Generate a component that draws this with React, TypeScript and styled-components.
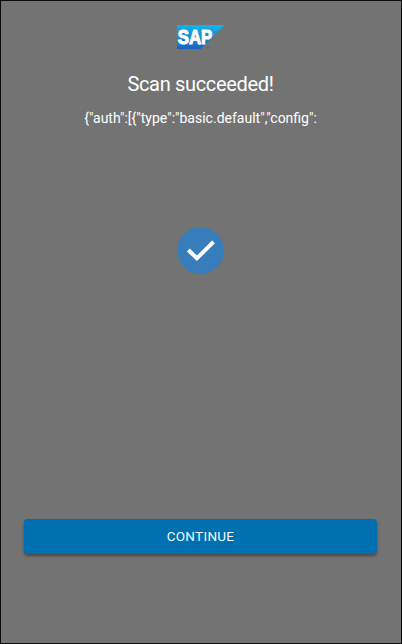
import React from "react";
import styled, { createGlobalStyle } from "styled-components";

const GlobalStyle = createGlobalStyle`
  * { box-sizing: border-box; }
  body { margin: 0; background: #737373; }
`;

const Screen = styled.main`
  width: 402px;
  height: 644px;
  padding: 24px 24px 0 23px;
  border: 1px solid #0c0c0c;
  background: #737373;
  display: flex;
  flex-direction: column;
  align-items: center;
  color: #fff;
  font-family: Roboto, "Noto Sans", sans-serif;
`;

const Logo = styled.svg`
  display: block;
  flex: none;
  width: 48px;
  height: 24px;
`;

const Title = styled.h1`
  margin: 21px 0 0;
  height: 28px;
  font-size: 20px;
  line-height: 28px;
  font-weight: 400;
  letter-spacing: -0.32px;
  white-space: nowrap;
`;

const Payload = styled.p`
  margin: 10px 0 0;
  height: 20px;
  font-size: 14px;
  line-height: 20px;
  white-space: nowrap;
`;

const StatusIcon = styled.svg`
  display: block;
  flex: none;
  width: 48px;
  height: 48px;
  margin-top: 98px;
`;

const ContinueButton = styled.button`
  width: 353px;
  height: 35px;
  margin-top: 245px;
  padding: 0;
  border: 0;
  border-radius: 4px;
  background: #0070b1;
  box-shadow: 0 2px 3px rgba(0, 0, 0, 0.38);
  color: #f4f9fc;
  font-family: inherit;
  font-size: 13.5px;
  letter-spacing: 0.3px;
  line-height: 35px;
`;

export default function App() {
  return (
    <>
      <GlobalStyle />
      <Screen>
        <Logo viewBox="0 0 48 24" role="img" aria-label="SAP">
          <defs>
            <linearGradient id="sapBlue" x1="0" y1="0" x2="0" y2="1">
              <stop offset="0" stopColor="#10b4ee" />
              <stop offset="1" stopColor="#1d62bd" />
            </linearGradient>
          </defs>
          <path d="M0 0H47.5L23.7 24H0Z" fill="url(#sapBlue)" />
          <text x="0.8" y="19" textLength="34.5" lengthAdjust="spacingAndGlyphs" fill="#fff" stroke="#fff" strokeWidth="1.1" fontFamily="Liberation Sans, sans-serif" fontWeight="700" fontSize="20">SAP</text>
          <circle cx="31" cy="22.3" r="1" fill="none" stroke="#2b6cae" strokeWidth="0.6" />
        </Logo>
        <Title>Scan succeeded!</Title>
        <Payload>{'{"auth":[{"type":"basic.default","config":'}</Payload>
        <StatusIcon viewBox="0 0 48 48" aria-hidden="true">
          <circle cx="23.7" cy="24.4" r="23.4" fill="#377dbb" />
          <path d="M11.3 24L19.9 32.3L36.5 15.8" fill="none" stroke="#fff" strokeWidth="4" />
        </StatusIcon>
        <ContinueButton type="button">CONTINUE</ContinueButton>
      </Screen>
    </>
  );
}
